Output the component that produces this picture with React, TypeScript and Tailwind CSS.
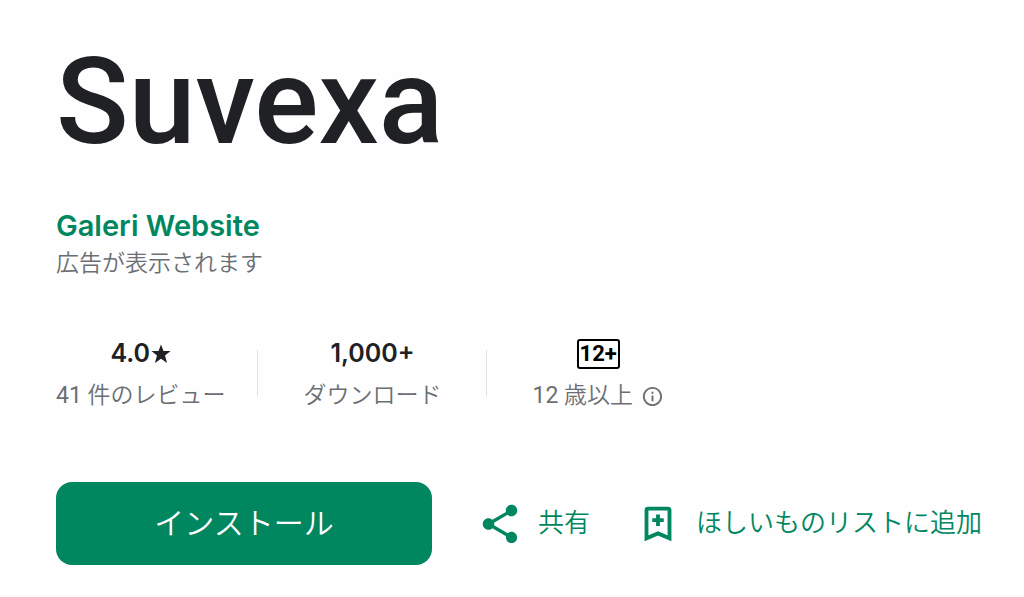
import React from 'react';

const LABEL = "text-[23px] leading-8 font-[350] text-[#6b6e73] whitespace-nowrap";
const VALUE = "flex h-8 items-center justify-center gap-px font-['Inter','Noto_Sans_CJK_JP',sans-serif] text-[25px] font-semibold text-[#202124]";
const ACTION = "flex shrink-0 items-center gap-[15px] text-[26px] font-[350] text-[#01875f] whitespace-nowrap";

function Divider() {
  return <div className="mt-3 h-[46px] w-px bg-[#dfe1e5]" />;
}

function StarIcon() {
  return (
    <svg className="size-5" viewBox="0 0 20 20" fill="currentColor" aria-hidden="true">
      <path d="M10 .6l2.500 6.500h7.100l-5.600 4.500 2.100 7.300L10 14.800l-6.100 4.100 2.100-7.300L.4 7.100h7.100z" />
    </svg>
  );
}

function InfoIcon() {
  return (
    <svg className="size-[23px]" viewBox="0 0 24 24" fill="currentColor" aria-hidden="true">
      <path d="M11 7h2v2h-2zm0 4h2v6h-2zm1-9C6.480 2 2 6.480 2 12s4.480 10 10 10 10-4.480 10-10S17.520 2 12 2zm0 18c-4.410 0-8-3.590-8-8s3.590-8 8-8 8 3.590 8 8-3.590 8-8 8z" />
    </svg>
  );
}

function ShareIcon() {
  return (
    <svg className="size-[46px]" viewBox="0 0 24 24" fill="currentColor" aria-hidden="true">
      <path d="M18 16.080c-.76 0-1.440.3-1.960.77L8.910 12.700c.05-.23.09-.46.09-.7s-.04-.47-.09-.7l7.050-4.110c.54.5 1.250.81 2.040.81 1.660 0 3-1.340 3-3s-1.340-3-3-3-3 1.340-3 3c0 .24.04.47.09.7L8.040 9.810C7.500 9.310 6.790 9 6 9c-1.660 0-3 1.340-3 3s1.340 3 3 3c.79 0 1.500-.31 2.040-.81l7.120 4.160c-.05.21-.08.43-.08.65 0 1.610 1.310 2.920 2.920 2.920s2.920-1.310 2.920-2.920-1.310-2.920-2.920-2.920z" />
    </svg>
  );
}

function BookmarkAddIcon() {
  return (
    <svg className="size-[46px]" viewBox="0 0 24 24" fill="none" stroke="currentColor" strokeWidth="2" aria-hidden="true">
      <path d="M6 4.800Q6 4 6.800 4h10.400Q18 4 18 4.800v14.700l-6-2.600-6 2.600z" />
      <path d="M12 7v6M9 10h6" strokeWidth="2" />
    </svg>
  );
}

export default function App() {
  return (
    <main
      lang="ja"
      className="min-h-screen bg-[#fefefe] pt-[42px] pr-6 pb-8 pl-14 font-['Roboto','Noto_Sans_CJK_JP',sans-serif]"
    >
      <h1 className="text-[120px] leading-none font-medium text-[#202124]">Suvexa</h1>

      <div className="mt-12">
        <a
          href="#developer"
          className="block w-fit font-['Inter','Noto_Sans_CJK_JP',sans-serif] text-[29px] leading-8 font-semibold text-[#01875f]"
        >
          Galeri Website
        </a>
        <p className={`${LABEL} mt-1.5`}>広告が表示されます</p>
      </div>

      <div className="mt-[58px] flex items-start">
        <div className="pr-8 text-center">
          <div className={VALUE}>
            4.0
            <StarIcon />
          </div>
          <div className={`${LABEL} mt-2.5`}>
            <span className="font-normal">41</span> 件のレビュー
          </div>
        </div>
        <Divider />
        <div className="px-[45px] text-center">
          <div className={VALUE}>1,000+</div>
          <div className={`${LABEL} mt-2.5`}>ダウンロード</div>
        </div>
        <Divider />
        <div className="pl-[45px] text-center">
          <div className={VALUE}>
            <span className="flex h-[30px] w-[43px] items-center justify-center rounded-[3px] border-2 border-black font-['Roboto',sans-serif] text-[22px] leading-none font-bold text-black">
              12+
            </span>
          </div>
          <div className={`${LABEL} mt-2.5 flex items-center gap-2`}>
            <span>
              <span className="font-normal">12</span> 歳以上
            </span>
            <button type="button" aria-label="年齢区分の詳細">
              <InfoIcon />
            </button>
          </div>
        </div>
      </div>

      <div className="mt-[70px] flex items-center gap-[45px]">
        <button
          type="button"
          className="h-[83px] w-[376px] shrink-0 rounded-2xl bg-[#01875f] text-[30px] font-[350] text-white"
        >
          インストール
        </button>
        <button type="button" className={ACTION}>
          <ShareIcon />
          共有
        </button>
        <button type="button" className={ACTION}>
          <BookmarkAddIcon />
          ほしいものリストに追加
        </button>
      </div>
    </main>
  );
}
